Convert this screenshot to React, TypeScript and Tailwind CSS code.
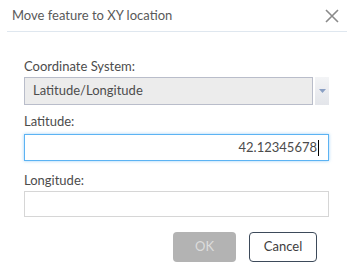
import React from "react";

export default function App() {
  return (
    <div
      className="w-[353px] h-[271px] bg-white text-[#4c4c4c] overflow-hidden flex flex-col"
      style={{ fontFamily: "Lato, 'Open Sans', sans-serif" }}
    >
      <div className="h-[31px] flex items-center justify-between pl-[12px] pr-[14px]">
        <span className="text-[13px] text-[#595959]">Move feature to XY location</span>
        <svg width="14" height="14" viewBox="0 0 14 14" className="text-[#8a8a8a]">
          <path d="M1 1 L13 13 M13 1 L1 13" stroke="currentColor" strokeWidth="1.6" fill="none" />
        </svg>
      </div>
      <div className="h-px bg-[#dfe7ef] ml-[7px] mr-[6px]" />
      <div className="flex flex-col px-[24px] pt-[26px]">
        <label className="text-[13px] leading-[16px]">Coordinate System:</label>
        <div className="mt-[3px] flex items-stretch h-[28px]">
          <div className="flex-1 bg-[#ececec] border border-[#b9bdca] flex items-center pl-[8px] text-[13px]">
            Latitude/Longitude
          </div>
          <div className="w-[14px] ml-[2px] bg-gradient-to-b from-[#f3f4f6] to-[#e3e5ea] flex items-center justify-center">
            <svg width="7" height="4" viewBox="0 0 7 4">
              <path d="M0 0 L7 0 L3.5 4 Z" fill="#8aa0c4" />
            </svg>
          </div>
        </div>
        <label className="mt-[8px] text-[13px] leading-[16px]">Latitude:</label>
        <div className="mt-[5px] h-[27px] border border-[#5cb3f3] shadow-[0_0_3px_rgba(92,179,243,0.6)] flex items-center justify-end pr-[9px] text-[13px]">
          <span>42.12345678</span>
          <span className="w-px h-[16px] bg-black ml-[1px]" />
        </div>
        <label className="mt-[11px] text-[13px] leading-[16px]">Longitude:</label>
        <div className="mt-[3px] h-[26px] border border-[#d6d6d6]" />
        <div className="mt-[15px] flex justify-end gap-[13px] pr-[12px]">
          <button className="w-[63px] h-[30px] rounded-[4px] bg-[#b3b3b3] text-[#dcdcdc] text-[13px]">
            OK
          </button>
          <button className="w-[68px] h-[30px] rounded-[4px] bg-white border border-[#3d4a5a] text-[#3d3d3d] text-[13px]">
            Cancel
          </button>
        </div>
      </div>
    </div>
  );
}
